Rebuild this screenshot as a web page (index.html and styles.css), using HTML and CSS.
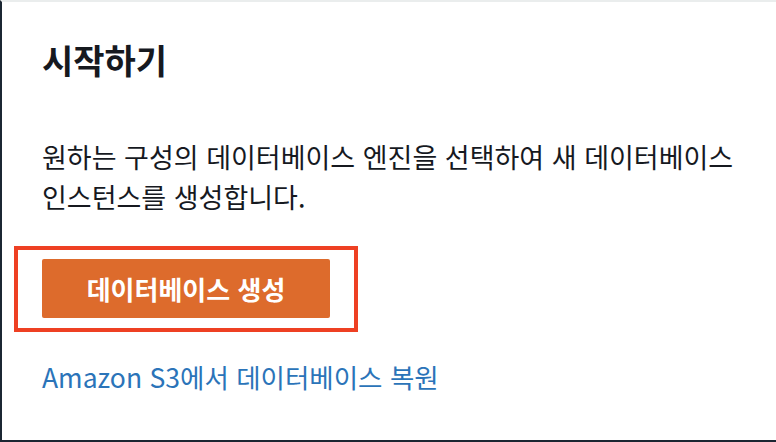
FILE: index.html
```html
<!DOCTYPE html>
<html lang="ko">
<head>
<meta charset="utf-8">
<link rel="stylesheet" href="styles.css">
</head>
<body>
<div class="panel">
  <h2 class="title">시작하기</h2>
  <p class="desc">원하는 구성의 데이터베이스 엔진을 선택하여 새 데이터베이스 인스턴스를 생성합니다.</p>
  <div class="highlight">
    <button class="btn-primary">데이터베이스 생성</button>
  </div>
  <a class="link" href="#">Amazon S3에서 데이터베이스 복원</a>
</div>
</body>
</html>
```
FILE: styles.css
```css
html, body {
  margin: 0;
  padding: 0;
  background: #ffffff;
}
body {
  font-family: "Noto Sans CJK KR", "Noto Sans", sans-serif;
  color: #16191f;
}
.panel {
  box-sizing: border-box;
  width: 776px;
  height: 442px;
  border-left: 2px solid #1b2632;
  border-top: 2px solid #eaeded;
  border-bottom: 2px solid #1b2632;
  padding: 0 40px 0 40px;
  display: flex;
  flex-direction: column;
  align-items: flex-start;
}
.title {
  margin: 36px 0 0 0;
  font-size: 34px;
  line-height: 44px;
  font-weight: 700;
}
.desc {
  margin: 55px 0 0 0;
  font-size: 27px;
  line-height: 40px;
  font-weight: 400;
  word-break: keep-all;
}
.highlight {
  margin: 29px 0 0 -28px;
  border: 4px solid #ee4023;
  padding: 9px 24px 10px 24px;
  display: flex;
}
.btn-primary {
  width: 288px;
  height: 59px;
  border: none;
  border-radius: 2px;
  background: #dd6b2c;
  color: #ffffff;
  font-family: "Noto Sans CJK KR", "Noto Sans", sans-serif;
  font-size: 26px;
  font-weight: 700;
  padding: 0;
}
.link {
  margin-top: 27px;
  font-size: 26.5px;
  line-height: 36px;
  color: #2b74b9;
  text-decoration: none;
}
```
